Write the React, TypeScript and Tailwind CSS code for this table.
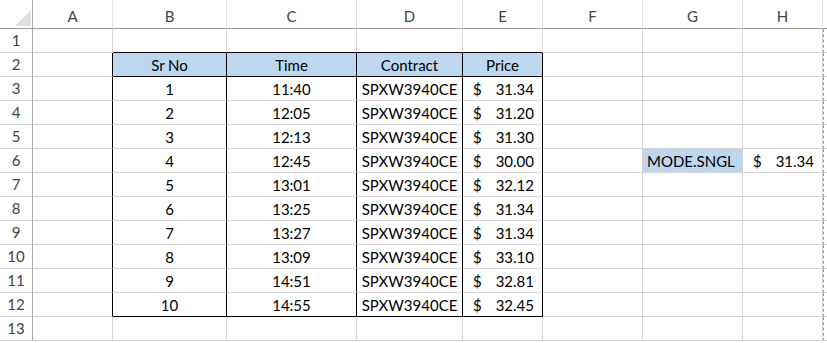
import React from 'react';

const cols = ['A', 'B', 'C', 'D', 'E', 'F', 'G', 'H'];

const rows = [
  { n: 1, time: '11:40', price: '31.34' },
  { n: 2, time: '12:05', price: '31.20' },
  { n: 3, time: '12:13', price: '31.30' },
  { n: 4, time: '12:45', price: '30.00' },
  { n: 5, time: '13:01', price: '32.12' },
  { n: 6, time: '13:25', price: '31.34' },
  { n: 7, time: '13:27', price: '31.34' },
  { n: 8, time: '13:09', price: '33.10' },
  { n: 9, time: '14:51', price: '32.81' },
  { n: 10, time: '14:55', price: '32.45' },
];

const grid = 'border-r border-b border-[#d4d4d4]';

function Money({ value }: { value: string }) {
  return (
    <div className="flex h-full w-full items-center justify-between pl-[10px] pr-[8px]">
      <span>$</span>
      <span>{value}</span>
    </div>
  );
}

export default function App() {
  const cells: React.ReactNode[] = [];

  // column header strip
  cells.push(
    <div key="corner" className="relative border-r border-b border-r-[#ababab] border-b-[#9b9b9b] bg-white">
      <svg className="absolute left-[15px] top-[10px]" width="16" height="16" viewBox="0 0 16 16">
        <polygon points="16,0 16,16 0,16" fill="#dfdfdf" />
      </svg>
    </div>
  );
  cols.forEach((c) =>
    cells.push(
      <div
        key={'h' + c}
        className="flex items-center justify-center border-b border-b-[#9b9b9b] border-r border-r-[#e1e1e1] pt-[4px] text-[15px] text-[#444]"
      >
        {c}
      </div>
    )
  );
  cells.push(<div key="hrest" className="border-b border-b-[#9b9b9b]" />);

  for (let r = 1; r <= 13; r++) {
    const inTable = r >= 2 && r <= 12;
    cells.push(
      <div key={'r' + r} className="flex items-center justify-center border-r border-r-[#ababab] border-b border-b-[#d4d4d4] text-[15px] text-[#444]">
        {r}
      </div>
    );
    cols.forEach((c, ci) => {
      const tableCol = ci >= 1 && ci <= 4;
      let cls = grid;
      if (c === 'A' && inTable) cls = 'border-r border-r-black border-b border-b-[#d4d4d4]';
      if (tableCol) {
        const rightBlack = inTable;
        const bottomBlack = r === 1 || r === 2 || r === 12;
        cls = `border-r border-b ${rightBlack ? 'border-r-black' : 'border-r-[#d4d4d4]'} ${bottomBlack ? 'border-b-black' : 'border-b-[#d4d4d4]'}`;
      }
      let content: React.ReactNode = null;
      let extra = 'flex items-center justify-center';
      if (r === 2 && tableCol) {
        extra += ' bg-[#bdd7ee]';
        content = ['Sr No', 'Time', 'Contract', 'Price'][ci - 1];
      } else if (r >= 3 && r <= 12 && tableCol) {
        const d = rows[r - 3];
        if (c === 'B') content = d.n;
        if (c === 'C') content = d.time;
        if (c === 'D') content = 'SPXW3940CE';
        if (c === 'E') content = <Money value={d.price} />;
      } else if (r === 6 && c === 'G') {
        extra = 'flex items-center justify-start pl-[4px] bg-[#bdd7ee]';
        content = 'MODE.SNGL';
      } else if (r === 6 && c === 'H') {
        content = <Money value="31.34" />;
      }
      cells.push(
        <div key={c + r} className={`${cls} ${extra} pt-[1px] text-[15px] text-black`}>
          {content}
        </div>
      );
    });
    cells.push(<div key={'rest' + r} className="border-l border-dashed border-l-[#9a9a9a] border-b border-b-[#d4d4d4]" />);
  }

  return (
    <div
      className="h-[343px] w-[827px] overflow-hidden bg-white"
      style={{ fontFamily: 'Lato, "Open Sans", sans-serif' }}
    >
      <div className="grid grid-cols-[33px_80px_114px_130px_106px_80px_100px_100px_80px_1fr] grid-rows-[29px_repeat(13,24px)] pt-0">
        {cells}
      </div>
    </div>
  );
}
